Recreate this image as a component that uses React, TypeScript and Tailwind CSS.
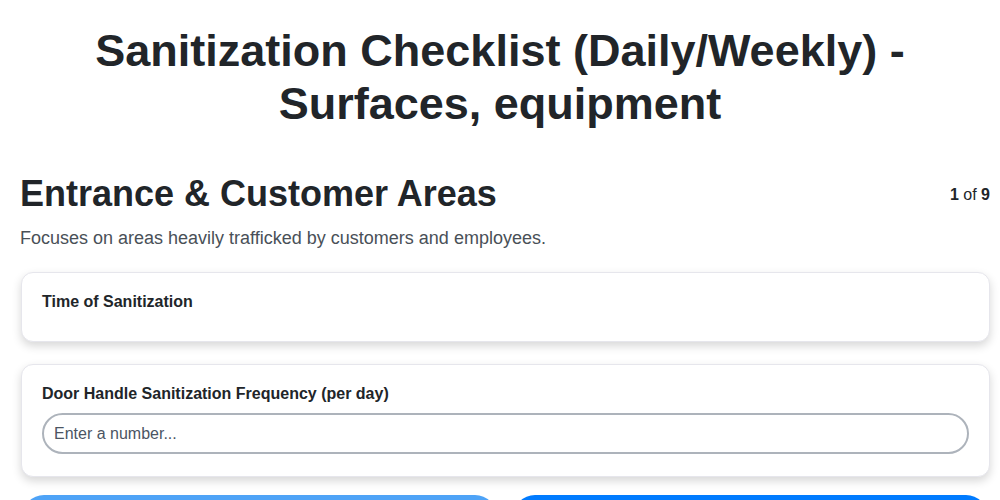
export default function App() {
  return (
    <div className="min-h-screen bg-white font-['Liberation_Sans',Arial,sans-serif] text-[#212529]">
      <h1 className="px-10 pt-6 text-center text-[45px] font-bold leading-[53px]">
        Sanitization Checklist (Daily/Weekly) -<br />
        Surfaces, equipment
      </h1>

      <div className="mt-[42px] pl-5 pr-2.5">
        <div className="flex items-start justify-between">
          <h2 className="text-[36px] font-bold leading-[1.2]">Entrance &amp; Customer Areas</h2>
          <span className="mt-[11px] text-base">
            <b>1</b> of <b>9</b>
          </span>
        </div>
        <p className="mt-[10px] text-[18px] text-[#495057]">
          Focuses on areas heavily trafficked by customers and employees.
        </p>

        <div className="mt-[20px] flex flex-col gap-[22px] pl-px">
          <div className="h-[70px] rounded-xl border border-[#e6e6ec] bg-white px-5 pt-[17px] shadow-[0_4px_10px_rgba(0,0,0,0.16)]">
            <label className="block text-base font-bold">Time of Sanitization</label>
          </div>

          <div className="rounded-xl border border-[#e6e6ec] bg-white px-5 pt-[17px] pb-[22px] shadow-[0_4px_10px_rgba(0,0,0,0.16)]">
            <label className="block text-base font-bold">
              Door Handle Sanitization Frequency (per day)
            </label>
            <input
              type="text"
              placeholder="Enter a number..."
              className="mt-[7px] h-[41px] w-full rounded-full border-2 border-[#adb3bb] px-[10px] text-base text-[#212529] outline-none placeholder:text-[#4b5563]"
            />
          </div>
        </div>

        <div className="mt-[18px] flex gap-4 pl-0.5 pr-0.5">
          <button className="h-11 flex-1 rounded-full bg-[#4ea3f7] text-base font-bold text-white">
            Previous
          </button>
          <button className="h-11 flex-1 rounded-full bg-[#007bff] text-base font-bold text-white">
            Next
          </button>
        </div>
      </div>
    </div>
  );
}
